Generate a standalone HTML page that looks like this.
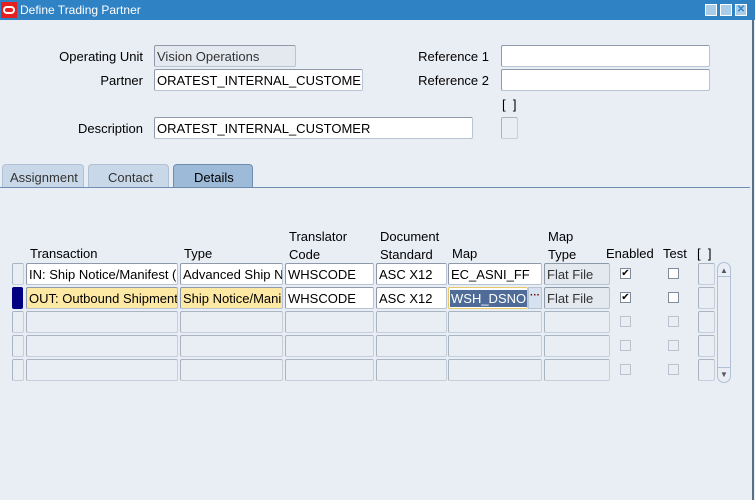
<!DOCTYPE html>
<html><head><style>
*{margin:0;padding:0;box-sizing:border-box}
body{width:755px;height:500px;background:#e9edf4;font-family:"Liberation Sans",sans-serif;font-size:13px;color:#000;position:relative;overflow:hidden}
.a{position:absolute;white-space:nowrap}
.f{position:absolute;background:#fff;border:1px solid #b7c4d4;border-top-color:#8e9aab;border-left-color:#8e9aab;border-radius:2px;padding:3px 0 0 2px;overflow:hidden;white-space:nowrap;height:22px;line-height:15px}
.g{background:#e4e8ef}
.y{background:#fde9a4}
.e{background:#e9edf4;border-color:#c5cfdc;border-top-color:#a9b4c3;border-left-color:#a9b4c3}
.r{text-align:right}
.cb{position:absolute;width:11px;height:11px;background:#fff;border:1px solid #7f8b9a;font-size:10px;line-height:9px;text-align:center}
.cbd{background:#e9edf4;border-color:#b9c3cf}
</style></head><body>
<div class="a" style="left:0;top:0;width:755px;height:20px;background:#2f82c4"></div>
<div class="a" style="left:1px;top:2px;width:16px;height:16px;background:#e5201f"><div style="position:absolute;left:2px;top:4px;width:12px;height:8px;border:2px solid #fff;border-radius:5px"></div></div>
<div class="a" style="left:20px;top:3px;color:#fff;font-size:12px">Define Trading Partner</div>
<div class="a" style="left:705px;top:4px;width:12px;height:12px;background:#a9cde9;border:1px solid #fff"></div>
<div class="a" style="left:720px;top:4px;width:12px;height:12px;background:#a9cde9;border:1px solid #fff"></div>
<div class="a" style="left:735px;top:4px;width:12px;height:12px;background:#a9cde9;border:1px solid #fff;font-size:10px;line-height:10px;text-align:center;color:#2f82c4;font-weight:bold">✕</div>
<div class="a" style="left:752px;top:20px;width:2px;height:480px;background:#5a6e88"></div>

<div class="a r" style="left:30px;width:113px;top:49px">Operating Unit</div>
<div class="f g" style="left:154px;top:45px;width:142px;color:#333">Vision Operations</div>
<div class="a r" style="left:30px;width:113px;top:73px">Partner</div>
<div class="f" style="left:154px;top:69px;width:209px">ORATEST_INTERNAL_CUSTOMER</div>
<div class="a r" style="left:30px;width:113px;top:121px">Description</div>
<div class="f" style="left:154px;top:117px;width:319px">ORATEST_INTERNAL_CUSTOMER</div>
<div class="a r" style="left:390px;width:99px;top:49px">Reference 1</div>
<div class="f" style="left:501px;top:45px;width:209px"></div>
<div class="a r" style="left:390px;width:99px;top:73px">Reference 2</div>
<div class="f" style="left:501px;top:69px;width:209px"></div>
<div class="a" style="left:502px;top:97px">[ &nbsp;]</div>
<div class="f e" style="left:501px;top:117px;width:17px"></div>

<div class="a" style="left:2px;top:164px;width:82px;height:24px;background:#c9d8e8;border:1px solid #b0c1d5;border-bottom:none;border-radius:4px 4px 0 0;padding:5px 0 0 7px;color:#333">Assignment</div>
<div class="a" style="left:88px;top:164px;width:81px;height:24px;background:#c9d8e8;border:1px solid #b0c1d5;border-bottom:none;border-radius:4px 4px 0 0;padding:5px 0 0 19px;color:#333">Contact</div>
<div class="a" style="left:173px;top:164px;width:80px;height:24px;background:#9dbad8;border:1px solid #6e8db0;border-bottom:none;border-radius:4px 4px 0 0;padding:5px 0 0 20px">Details</div>
<div class="a" style="left:0;top:187px;width:750px;height:1px;background:#6e8db0"></div>

<div class="a" style="left:30px;top:246px">Transaction</div>
<div class="a" style="left:184px;top:246px">Type</div>
<div class="a" style="left:289px;top:228px;line-height:18px">Translator<br>Code</div>
<div class="a" style="left:380px;top:228px;line-height:18px">Document<br>Standard</div>
<div class="a" style="left:452px;top:246px">Map</div>
<div class="a" style="left:548px;top:228px;line-height:18px">Map<br>Type</div>
<div class="a" style="left:606px;top:246px">Enabled</div>
<div class="a" style="left:663px;top:246px">Test</div>
<div class="a" style="left:697px;top:246px">[ &nbsp;]</div>

<div class="f e" style="left:12px;top:263px;width:12px"></div>
<div class="f" style="left:26px;top:263px;width:152px">IN: Ship Notice/Manifest (I</div>
<div class="f" style="left:180px;top:263px;width:103px">Advanced Ship N</div>
<div class="f" style="left:285px;top:263px;width:89px">WHSCODE</div>
<div class="f" style="left:376px;top:263px;width:71px">ASC X12</div>
<div class="f" style="left:448px;top:263px;width:94px">EC_ASNI_FF</div>
<div class="f g" style="left:544px;top:263px;width:66px;color:#333">Flat File</div>
<div class="cb" style="left:620px;top:268px">✔</div>
<div class="cb" style="left:668px;top:268px"></div>
<div class="f e" style="left:698px;top:263px;width:17px"></div>

<div class="a" style="left:12px;top:287px;width:11px;height:22px;background:#000080;border-radius:2px"></div>
<div class="f y" style="left:26px;top:287px;width:152px">OUT: Outbound Shipment</div>
<div class="f y" style="left:180px;top:287px;width:103px">Ship Notice/Mani</div>
<div class="f" style="left:285px;top:287px;width:89px">WHSCODE</div>
<div class="f" style="left:376px;top:287px;width:71px">ASC X12</div>
<div class="f" style="left:448px;top:287px;width:80px;padding:0;border-color:#e8c96a"><span style="display:inline-block;background:#4e6c97;color:#fff;margin:2px 0 0 1px;padding:1px 1px">WSH_DSNO</span></div>
<div class="a" style="left:528px;top:287px;width:14px;height:22px;background:#d6e2ef;border:1px solid #b7c4d4;font-size:10px;text-align:center;line-height:16px;color:#600;font-weight:bold">···</div>
<div class="f g" style="left:544px;top:287px;width:66px;color:#333">Flat File</div>
<div class="cb" style="left:620px;top:292px">✔</div>
<div class="cb" style="left:668px;top:292px"></div>
<div class="f e" style="left:698px;top:287px;width:17px"></div>
<div id="er"></div>
<script>
var h='';[311,335,359].forEach(function(t){
h+='<div class="f e" style="left:12px;top:'+t+'px;width:12px"></div>';
[[26,152],[180,103],[285,89],[376,71],[448,94],[544,66]].forEach(function(c){h+='<div class="f e" style="left:'+c[0]+'px;top:'+t+'px;width:'+c[1]+'px"></div>';});
h+='<div class="cb cbd" style="left:620px;top:'+(t+5)+'px"></div><div class="cb cbd" style="left:668px;top:'+(t+5)+'px"></div>';
h+='<div class="f e" style="left:698px;top:'+t+'px;width:17px"></div>';});
document.getElementById('er').innerHTML=h;
</script>
<div class="a" style="left:717px;top:262px;width:14px;height:121px;border:1px solid #b0c1d5;border-radius:7px;background:#e9edf4"></div>
<div class="a" style="left:720px;top:266px;font-size:8px;color:#556">▲</div>
<div class="a" style="left:720px;top:370px;font-size:8px;color:#556">▼</div>
<div class="a" style="left:718px;top:276px;width:12px;height:1px;background:#b0c1d5"></div>
<div class="a" style="left:718px;top:367px;width:12px;height:1px;background:#b0c1d5"></div>
</body></html>
